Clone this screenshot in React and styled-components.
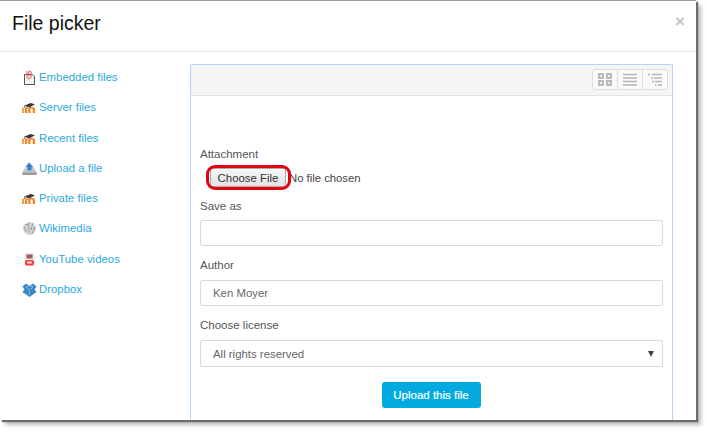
import React from "react";
import styled, { createGlobalStyle } from "styled-components";

const Global = createGlobalStyle`
  html, body { margin: 0; padding: 0; background: #fff; }
  body { width: 708px; height: 432px; overflow: hidden; font-family: "Liberation Sans", Arial, sans-serif; }
`;
const Page = styled.div`
  width: 708px; height: 432px; padding-bottom: 12px; box-sizing: border-box;
`;
const Dialog = styled.div`
  width: 696px; height: 420px; background: #fff; box-sizing: border-box;
  border-top: 1px solid #9a9a9a;
  box-shadow: 2px 2px 1px #6b6b6b, 5px 5px 4px #bbb;
  display: flex; flex-direction: column; overflow: hidden;
`;
const Header = styled.header`
  height: 51px; flex: none; display: flex; justify-content: space-between; align-items: center;
  padding: 0 11px 6px 12px; box-sizing: border-box; border-bottom: 1px solid #e5e5e5;
`;
const Title = styled.h3`
  margin: 0; font-weight: 400; font-size: 19.5px; color: #111;
`;
const Close = styled.span`
  font-size: 17px; font-weight: 700; color: #c4c4c4; line-height: 1; margin-top: -4px;
`;
const Body = styled.div`
  flex: 1; display: flex; min-height: 0; padding-top: 12px;
`;
const Sidebar = styled.nav`
  width: 190px; flex: none; padding-top: 6px; box-sizing: border-box;
`;
const NavItem = styled.a`
  height: 30.25px; display: flex; align-items: flex-start; padding-left: 22px; gap: 2px;
  font-size: 11.4px; line-height: 15px; color: #2aa9e0;
`;
const IconBox = styled.svg`
  width: 15px; height: 15px; flex: none;
`;
const Panel = styled.section`
  width: 483px; flex: none; box-sizing: border-box;
  border: 1px solid #b9d2f7; border-bottom: none; border-radius: 2px 2px 0 0;
`;
const Toolbar = styled.div`
  height: 31px; background: #f5f5f5; border-bottom: 1px solid #e3e3e3;
  display: flex; justify-content: flex-end; align-items: flex-start; padding: 4px 4px 0 0;
  box-sizing: border-box;
`;
const ViewGroup = styled.div`
  display: flex; height: 19px; background: #fafafa; border: 1px solid #ddd; border-radius: 3px;
`;
const ViewBtn = styled.div`
  width: 24px; display: flex; align-items: center; justify-content: center;
  & + & { border-left: 1px solid #ddd; }
`;
const Form = styled.div`
  padding: 51px 9px 0 9px; display: flex; flex-direction: column;
`;
const Label = styled.label`
  font-size: 11.5px; line-height: 15px; color: #555; display: block;
`;
const FileRow = styled.div`
  position: relative; display: flex; align-items: center; height: 19px;
  margin: 6px 0 12px 10px; gap: 3px;
`;
const FileButton = styled.button`
  width: 76px; height: 19px; padding: 0; box-sizing: border-box; border: 1px solid #a9a9a9; border-radius: 2px;
  background: linear-gradient(#f6f6f6, #e3e3e3); font: 11.4px "Liberation Sans", Arial, sans-serif; color: #333;
`;
const FileText = styled.span`
  font-size: 11.3px; color: #444;
`;
const Ring = styled.span`
  position: absolute; left: -4px; top: -3px; width: 85px; height: 25px; box-sizing: border-box;
  border: 3px solid #e3000f; border-radius: 9px; pointer-events: none;
`;
const Input = styled.div`
  height: 26px; box-sizing: border-box; border: 1px solid #d9d9d9; border-radius: 2px; background: #fff;
  padding: 0 12px; display: flex; align-items: center; justify-content: space-between;
  font-size: 11.4px; color: #666; margin: ${(p) => p.$top || 7}px 0 12px;
`;
const SelectBox = styled(Input)`
  height: 27px; padding-right: 8px; margin-bottom: 15px;
`;
const Arrow = styled.svg`
  width: 6px; height: 6px;
`;
const Submit = styled.button`
  align-self: center; width: 99px; height: 26px; border: 0; border-radius: 3px; background: #02aadf;
  color: #fff; font: 400 11.5px "Liberation Sans", Arial, sans-serif; padding: 0; margin-right: 1px;
  -webkit-text-stroke: 0.2px #fff;
`;

const Moodle = () => (
  <IconBox viewBox="0 0 15 15">
    <path d="M0 13V8.500C0 7.600 1 7.300 2.200 7.600V13z" fill="#f2a04e" />
    <path d="M3 13V8.500c0-1.700 3-1.700 3.800-.3 1-1.400 5.700-1.700 6.200.6V13h-2.300V9c0-.8-2.200-.8-2.200 0v4H6.200V9c0-.8-1-.8-1 0v4z" fill="#ef8420" />
    <path d="M2 5.800L8.500 3 13 4.300 7.500 7.600z" fill="#3a3a3a" />
    <path d="M2.500 5.800V8" stroke="#666" strokeWidth="0.800" />
  </IconBox>
);
const Embedded = () => (
  <IconBox viewBox="0 0 15 15">
    <path d="M2.500 4.500h8l2 2v8h-10z" fill="#f2f2f2" stroke="#555" />
    <path d="M5 1v6c0 2.200 4 2.200 4 0V2C9 .800 6.700 .800 6.700 2v4.500" fill="none" stroke="#e2524f" strokeWidth="1" />
  </IconBox>
);
const Upload = () => (
  <IconBox viewBox="0 0 15 15">
    <path d="M0.500 11l3-5h8l3 5v3h-14z" fill="#c4c8cc" />
    <path d="M0.500 11.500h14V14h-14z" fill="#9a9a9a" />
    <path d="M7 1.500L11.500 6H9.500v3.500h-4V6H3.500z" fill="#3d82c8" />
  </IconBox>
);
const Wiki = () => (
  <IconBox viewBox="0 0 15 15">
    <circle cx="7.500" cy="7.500" r="6.500" fill="#d4d4d4" />
    <path d="M2 5l2 6M3 3.500h3M7 1.500L6 5l3 4 2-7M5.500 8L8 12M10 13l3-7M11 7h3" stroke="#a0a0a0" fill="none" strokeWidth="1" />
  </IconBox>
);
const YouTube = () => (
  <IconBox viewBox="0 0 15 15">
    <rect x="2.500" y="1" width="10" height="13" rx="2.500" fill="#e9e4e4" />
    <path d="M4.500 2.500h6v4h-6z" fill="#9d5f5c" />
    <rect x="3" y="8" width="9" height="5.500" rx="2" fill="#e8423a" />
    <rect x="5" y="9.500" width="5" height="2" rx="0.800" fill="#fbdcda" />
  </IconBox>
);
const Dropbox = () => (
  <IconBox viewBox="0 0 15 15">
    <path d="M4 1.500L7.500 4 11 1.500 14.500 4.500 12.500 7.500 14.500 10 11 12.500 7.500 15 4 12.500 0.500 10 2.500 7.500 0.500 4.500z" fill="#3c86c6" />
    <path d="M4 5L7.500 3.500 11 5 7.500 8zM7.500 9v4" stroke="#a9d0ee" strokeWidth="0.700" fill="none" />
  </IconBox>
);

const repos = [
  ["Embedded files", Embedded],
  ["Server files", Moodle],
  ["Recent files", Moodle],
  ["Upload a file", Upload],
  ["Private files", Moodle],
  ["Wikimedia", Wiki],
  ["YouTube videos", YouTube],
  ["Dropbox", Dropbox],
];

export default function App() {
  return (
    <Page>
      <Global />
      <Dialog>
        <Header>
          <Title>File picker</Title>
          <Close>×</Close>
        </Header>
        <Body>
          <Sidebar>
            {repos.map(([name, Icon]) => (
              <NavItem key={name}>
                <Icon />
                {name}
              </NavItem>
            ))}
          </Sidebar>
          <Panel>
            <Toolbar>
              <ViewGroup>
                <ViewBtn>
                  <svg width="14" height="13" viewBox="0 0 14 13" fill="#eee" stroke="#bbb" strokeWidth="2">
                    <rect x="1" y="1" width="4" height="4" />
                    <rect x="9" y="1" width="4" height="4" />
                    <rect x="1" y="8" width="4" height="4" />
                    <rect x="9" y="8" width="4" height="4" />
                  </svg>
                </ViewBtn>
                <ViewBtn>
                  <svg width="14" height="13" viewBox="0 0 14 13" stroke="#b5b5b5" strokeWidth="1.500">
                    <path d="M0 1.500h14M0 5h14M0 8.500h14M0 12h14" />
                  </svg>
                </ViewBtn>
                <ViewBtn>
                  <svg width="14" height="13" viewBox="0 0 14 13" stroke="#b5b5b5" strokeWidth="1.500">
                    <path d="M0 1.500h2M4 1.500h10M3 5h2M6 5h8M4 8.500h2M7 8.500h7M7 12h1.500M10 12h4" />
                  </svg>
                </ViewBtn>
              </ViewGroup>
            </Toolbar>
            <Form>
              <Label>Attachment</Label>
              <FileRow>
                <FileButton>Choose File</FileButton>
                <FileText>No file chosen</FileText>
                <Ring />
              </FileRow>
              <Label>Save as</Label>
              <Input $top={6} />
              <Label>Author</Label>
              <Input>Ken Moyer</Input>
              <Label>Choose license</Label>
              <SelectBox>
                All rights reserved
                <Arrow viewBox="0 0 6 6"><path d="M0 0h6L3 6z" fill="#444" /></Arrow>
              </SelectBox>
              <Submit>Upload this file</Submit>
            </Form>
          </Panel>
        </Body>
      </Dialog>
    </Page>
  );
}
